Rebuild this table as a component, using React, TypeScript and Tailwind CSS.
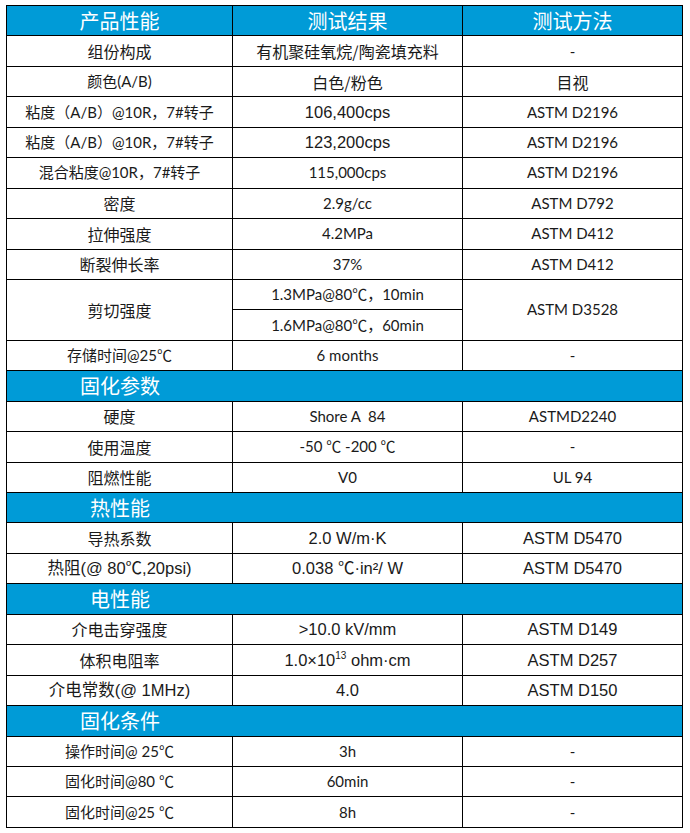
import type { ReactNode } from "react";

// Calibri-like and Arial-like stacks, CJK falls back to Noto Sans CJK SC
const CAL = "font-['Lato','Noto_Sans_CJK_SC',sans-serif] text-[15px]";
const ARI = "font-['Liberation_Sans','Noto_Sans_CJK_SC',sans-serif] text-[16.5px]";
const CJK = "font-['Noto_Sans_CJK_SC',sans-serif] text-[16px]";

type Cell = { text: ReactNode; font: string };
type Row =
  | { kind: "head"; cells: string[] }
  | { kind: "section"; title: string }
  | { kind: "data"; cells: Cell[] }
  | { kind: "split"; label: Cell; values: Cell[]; method: Cell };

const c = (text: ReactNode, font = CAL): Cell => ({ text, font });

const rows: Row[] = [
  { kind: "head", cells: ["产品性能", "测试结果", "测试方法"] },
  { kind: "data", cells: [c("组份构成", CJK), c("有机聚硅氧烷/陶瓷填充料", CJK), c("-")] },
  { kind: "data", cells: [c("颜色(A/B)"), c("白色/粉色", CJK), c("目视", CJK)] },
  { kind: "data", cells: [c("粘度（A/B）@10R，7#转子"), c("106,400cps", ARI), c("ASTM D2196")] },
  { kind: "data", cells: [c("粘度（A/B）@10R，7#转子"), c("123,200cps", ARI), c("ASTM D2196")] },
  { kind: "data", cells: [c("混合粘度@10R，7#转子"), c("115,000cps"), c("ASTM D2196")] },
  { kind: "data", cells: [c("密度", CJK), c("2.9g/cc"), c("ASTM D792")] },
  { kind: "data", cells: [c("拉伸强度", CJK), c("4.2MPa"), c("ASTM D412")] },
  { kind: "data", cells: [c("断裂伸长率", CJK), c("37%"), c("ASTM D412")] },
  {
    kind: "split",
    label: c("剪切强度", CJK),
    values: [c("1.3MPa@80℃，10min"), c("1.6MPa@80℃，60min")],
    method: c("ASTM D3528"),
  },
  { kind: "data", cells: [c("存储时间@25℃"), c("6 months"), c("-")] },
  { kind: "section", title: "固化参数" },
  { kind: "data", cells: [c("硬度", CJK), c("Shore A\u00a0\u00a084"), c("ASTMD2240")] },
  { kind: "data", cells: [c("使用温度", CJK), c("-50 ℃ -200 ℃"), c("-")] },
  { kind: "data", cells: [c("阻燃性能", CJK), c("V0"), c("UL 94")] },
  { kind: "section", title: "热性能" },
  { kind: "data", cells: [c("导热系数", CJK), c("2.0 W/m·K", ARI), c("ASTM D5470", ARI)] },
  { kind: "data", cells: [c("热阻(@ 80℃,20psi)", ARI), c("0.038 ℃·in²/ W", ARI), c("ASTM D5470", ARI)] },
  { kind: "section", title: "电性能" },
  { kind: "data", cells: [c("介电击穿强度", CJK), c(">10.0 kV/mm", ARI), c("ASTM D149", ARI)] },
  {
    kind: "data",
    cells: [
      c("体积电阻率", CJK),
      c(
        <>
          1.0×10<sup className="text-[10px] relative top-[-0.7em]">13</sup> ohm·cm
        </>,
        ARI
      ),
      c("ASTM D257", ARI),
    ],
  },
  { kind: "data", cells: [c("介电常数(@ 1MHz)", ARI), c("4.0", ARI), c("ASTM D150", ARI)] },
  { kind: "section", title: "固化条件" },
  { kind: "data", cells: [c("操作时间@ 25℃"), c("3h"), c("-")] },
  { kind: "data", cells: [c("固化时间@80 ℃"), c("60min"), c("-")] },
  { kind: "data", cells: [c("固化时间@25 ℃"), c("8h"), c("-")] },
];

const td = "border border-black text-center align-middle p-0 leading-none text-[#1a1a1a]";
const rowH = "h-[30.44px]";

export default function App() {
  return (
    <div className="w-[690px] h-[833px] bg-white pt-[5px] pl-[6px]">
      <table className="border-collapse table-fixed w-[676px]">
        <colgroup>
          <col className="w-[226px]" />
          <col className="w-[230px]" />
          <col className="w-[220px]" />
        </colgroup>
        <tbody>
          {rows.map((row, i) => {
            if (row.kind === "head") {
              return (
                <tr key={i} className={`${rowH} bg-[#009bd7]`}>
                  {row.cells.map((t) => (
                    <td key={t} className={`${td} text-white text-[20px] font-['Noto_Sans_CJK_SC',sans-serif]`}>
                      {t}
                    </td>
                  ))}
                </tr>
              );
            }
            if (row.kind === "section") {
              return (
                <tr key={i} className={`${rowH} bg-[#009bd7]`}>
                  <td colSpan={3} className="border border-black p-0 leading-none">
                    <div className="w-[226px] text-center text-white text-[20px] font-['Noto_Sans_CJK_SC',sans-serif]">
                      {row.title}
                    </div>
                  </td>
                </tr>
              );
            }
            if (row.kind === "split") {
              return [
                <tr key={i} className={rowH}>
                  <td rowSpan={2} className={`${td} ${row.label.font}`}>
                    {row.label.text}
                  </td>
                  <td className={`${td} ${row.values[0].font}`}>{row.values[0].text}</td>
                  <td rowSpan={2} className={`${td} ${row.method.font}`}>
                    {row.method.text}
                  </td>
                </tr>,
                <tr key={i + "b"} className={rowH}>
                  <td className={`${td} ${row.values[1].font}`}>{row.values[1].text}</td>
                </tr>,
              ];
            }
            return (
              <tr key={i} className={rowH}>
                {row.cells.map((cell, j) => (
                  <td key={j} className={`${td} ${cell.font}`}>
                    {cell.text}
                  </td>
                ))}
              </tr>
            );
          })}
        </tbody>
      </table>
    </div>
  );
}
